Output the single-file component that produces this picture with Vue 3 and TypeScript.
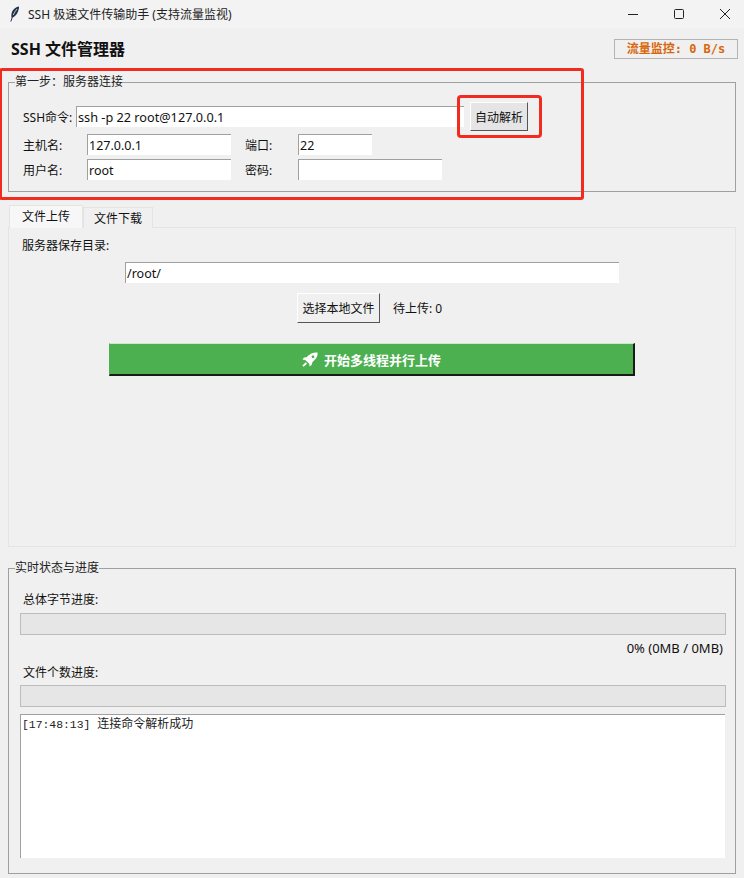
<script setup lang="ts">
const title = 'SSH 极速文件传输助手 (支持流量监视)'
</script>

<template>
  <div class="window">
    <header class="titlebar">
      <svg class="feather" width="10" height="16" viewBox="0 0 10 16">
        <path d="M9 0.5 C5.5 1 2.5 3.5 1.6 7.5 C1.2 9.5 1.3 10.8 1.7 11.8 C4.5 11 7 8.5 8 5.5 C8.7 3.6 9.2 2 9 0.5 Z" fill="#26344a" />
        <path d="M7.6 2.2 C5 5 2.6 9.8 0.8 15.5" fill="none" stroke="#26344a" stroke-width="1" />
        <path d="M7 3 C5.5 4.8 4.2 6.8 3.2 9" fill="none" stroke="#dfe7f0" stroke-width="0.8" />
      </svg>
      <span class="title-text">{{ title }}</span>
      <div class="win-controls">
        <svg width="12" height="12" viewBox="0 0 12 12"><path d="M1 6.5H11" stroke="#222" fill="none" /></svg>
        <svg width="12" height="12" viewBox="0 0 12 12"><rect x="1.5" y="1.5" width="9" height="9" rx="1" stroke="#222" fill="none" /></svg>
        <svg width="12" height="12" viewBox="0 0 12 12"><path d="M1 1L11 11M11 1L1 11" stroke="#222" fill="none" /></svg>
      </div>
    </header>

    <div class="topline">
      <h1 class="app-title">SSH 文件管理器</h1>
      <div class="monitor">流量监控: 0 B/s</div>
    </div>

    <fieldset class="group conn">
      <legend>第一步：服务器连接</legend>
      <div class="cmd-row">
        <label class="cmd-label">SSH命令:</label>
        <input class="entry cmd-entry" value="ssh -p 22 root@127.0.0.1" />
        <button class="btn parse-btn">自动解析</button>
      </div>
      <div class="field-row first">
        <label class="f-label">主机名:</label>
        <input class="entry wide" value="127.0.0.1" />
        <label class="f-label second">端口:</label>
        <input class="entry port" value="22" />
      </div>
      <div class="field-row">
        <label class="f-label">用户名:</label>
        <input class="entry wide" value="root" />
        <label class="f-label second">密码:</label>
        <input class="entry pass" value="" />
      </div>
    </fieldset>

    <nav class="tabs">
      <div class="tab active">文件上传</div>
      <div class="tab">文件下载</div>
    </nav>
    <section class="panel">
      <div class="dir-label">服务器保存目录:</div>
      <input class="entry dir-entry" value="/root/" />
      <div class="pick-row">
        <button class="btn pick-btn">选择本地文件</button>
        <span class="pending">待上传: 0</span>
      </div>
      <button class="start-btn">
        <svg width="16" height="15" viewBox="0 0 16 15">
          <path d="M15.6 0.6 C12 0.2 8.6 1.4 6 3.8 L4.6 5.2 L2 5.6 L0.4 7.6 L3.2 8 L7.2 11.8 L7.6 14.4 L9.8 12.8 L10.4 10.2 L11.8 8.8 C14.4 6.4 15.9 4 15.6 0.6 Z" fill="#fff" />
          <circle cx="11" cy="4.8" r="1.4" fill="#4caf50" />
          <path d="M1 14.2 L4.4 11" stroke="#fff" stroke-width="1.8" />
        </svg>
        <span>开始多线程并行上传</span>
      </button>
    </section>

    <fieldset class="group status">
      <legend>实时状态与进度</legend>
      <div class="bar-label">总体字节进度:</div>
      <div class="bar"></div>
      <div class="pct">0% (0MB / 0MB)</div>
      <div class="bar-label count">文件个数进度:</div>
      <div class="bar tight"></div>
      <div class="log"><span class="stamp">[17:48:13]</span> <span class="msg">连接命令解析成功</span></div>
    </fieldset>

    <!-- red annotation overlays -->
    <div class="mark mark-group"></div>
    <div class="mark mark-btn"></div>
  </div>
</template>

<style>
html, body { margin: 0; background: #f0f0f0; }
</style>

<style scoped>
.window {
  position: relative;
  width: 744px;
  height: 878px;
  overflow: hidden;
  background: #f0f0f0;
  color: #111;
  font-family: "Noto Sans", "Noto Sans CJK SC", sans-serif;
  font-size: 12px;
}
.titlebar {
  height: 28px;
  display: flex;
  align-items: center;
  padding-left: 10px;
  background: #f3f3f3;
}
.feather { flex: none; }
.title-text { margin-left: 8px; color: #222; white-space: nowrap; }
.win-controls { margin-left: auto; display: flex; gap: 34px; padding-right: 13px; }
.win-controls svg { display: block; }

.topline {
  height: 46px;
  display: flex;
  justify-content: space-between;
  padding: 10px 6px 0 11px;
  box-sizing: border-box;
}
.app-title { margin: 0; font-size: 16px; line-height: 22px; font-weight: 700; color: #111; }
.monitor {
  width: 124px;
  height: 20px;
  margin-top: 1px;
  box-sizing: border-box;
  border: 1px solid #b4b4b4;
  text-align: center;
  font-family: "DejaVu Sans Mono", "Noto Sans CJK SC", monospace;
  font-weight: 700;
  font-size: 12px;
  line-height: 18px;
  color: #d9660a;
  white-space: nowrap;
}

.group {
  margin: 0 8px;
  padding: 0;
  border: 1px solid #a0a0a0;
  border-radius: 0;
  min-width: 0;
}
.group legend {
  margin-left: 6px;
  padding: 0;
  font-size: 12px;
  line-height: 16px;
  color: #222;
}
.conn { height: 118px; box-sizing: border-box; }

.entry {
  display: block;
  box-sizing: border-box;
  height: 21px;
  border: 0;
  border-top: 1px solid #a0a0a0;
  border-left: 1px solid #a0a0a0;
  background: #fff;
  padding: 0 1px;
  margin: 0;
  font: inherit;
  font-size: 12.5px;
  color: #111;
  outline: none;
}
.btn {
  box-sizing: border-box;
  margin: 0;
  padding: 0;
  border: 1px solid;
  border-color: #fff #555 #555 #fff;
  background: #f0f0f0;
  font: inherit;
  color: #111;
}

.cmd-row { display: flex; align-items: center; height: 29px; margin-top: 12px; padding-left: 14px; }
.cmd-label { width: 53px; flex: none; white-space: nowrap; }
.cmd-entry { width: 388px; flex: none; font-size: 12.7px; }
.parse-btn { width: 58px; height: 29px; margin-left: 6px; background: #e5e5e5; flex: none; }

.field-row { display: flex; align-items: center; height: 21px; padding-left: 14px; margin-top: 4px; }
.field-row.first { margin-top: 3px; }
.f-label { width: 64px; flex: none; }
.f-label.second { width: 53px; margin-left: 14px; }
.wide { width: 144px; flex: none; }
.port { width: 74px; flex: none; }
.pass { width: 144px; flex: none; }

.tabs { display: flex; align-items: flex-end; margin: 12px 0 0 9px; height: 24px; }
.tab {
  width: 70px;
  height: 21px;
  box-sizing: border-box;
  text-align: center;
  line-height: 21px;
  background: #f0f0f0;
  border: 1px solid #e4e4e4;
  border-bottom: 0;
  margin-left: 0;
}
.tab.active { width: 74px; height: 23px; line-height: 22px; background: #f7f7f7; }

.panel {
  height: 320px;
  margin: -1px 8px 0;
  box-sizing: border-box;
  border: 1px solid #e4e4e4;
  padding-top: 9px;
}
.dir-label { margin-left: 13px; line-height: 17px; }
.dir-entry { width: 494px; margin: 8px 0 0 116px; }
.pick-row { display: flex; align-items: center; margin: 10px 0 0 288px; height: 30px; }
.pick-btn { width: 83px; height: 30px; }
.pending { margin-left: 13px; white-space: nowrap; }
.start-btn {
  display: flex;
  align-items: center;
  justify-content: center;
  gap: 6px;
  width: 526px;
  height: 33px;
  margin: 20px 0 0 100px;
  padding: 0;
  box-sizing: border-box;
  border: 1px solid;
  border-width: 1px 2px 2px 1px;
  border-color: #c8eccb #1a1a1a #1a1a1a #4caf50;
  background: #4caf50;
  color: #fff;
  font: inherit;
  font-size: 13px;
  font-weight: 700;
}

.status { height: 314px; box-sizing: border-box; margin-top: 13px; }
.bar-label { margin: 16px 0 0 14px; line-height: 16px; }
.bar {
  height: 22px;
  margin: 5px 9px 0 11px;
  box-sizing: border-box;
  border: 1px solid #bcbcbc;
  background: #e6e6e6;
}
.bar.tight { margin-top: 4px; }
.pct { text-align: right; font-size: 13px; margin: 5px 12px 0 0; line-height: 17px; }
.bar-label.count { margin-top: 8px; }
.log {
  height: 144px;
  margin: 7px 10px 0 11px;
  box-sizing: border-box;
  border-top: 1px solid #a0a0a0;
  border-left: 1px solid #a0a0a0;
  background: #fff;
  padding: 0 1px;
  font-family: "Liberation Mono", "Noto Sans CJK SC", monospace;
  font-size: 11.4px;
  line-height: 15px;
  color: #222;
  white-space: pre;
}
.msg { font-family: "Noto Sans CJK SC", sans-serif; font-size: 12px; }

.mark {
  position: absolute;
  box-sizing: border-box;
  border: 3px solid #f22b20;
  border-radius: 3px;
  pointer-events: none;
}
.mark-group { left: -1px; top: 68px; width: 585px; height: 132px; }
.mark-btn { left: 457px; top: 95px; width: 85px; height: 43px; border-radius: 4px; }
</style>
